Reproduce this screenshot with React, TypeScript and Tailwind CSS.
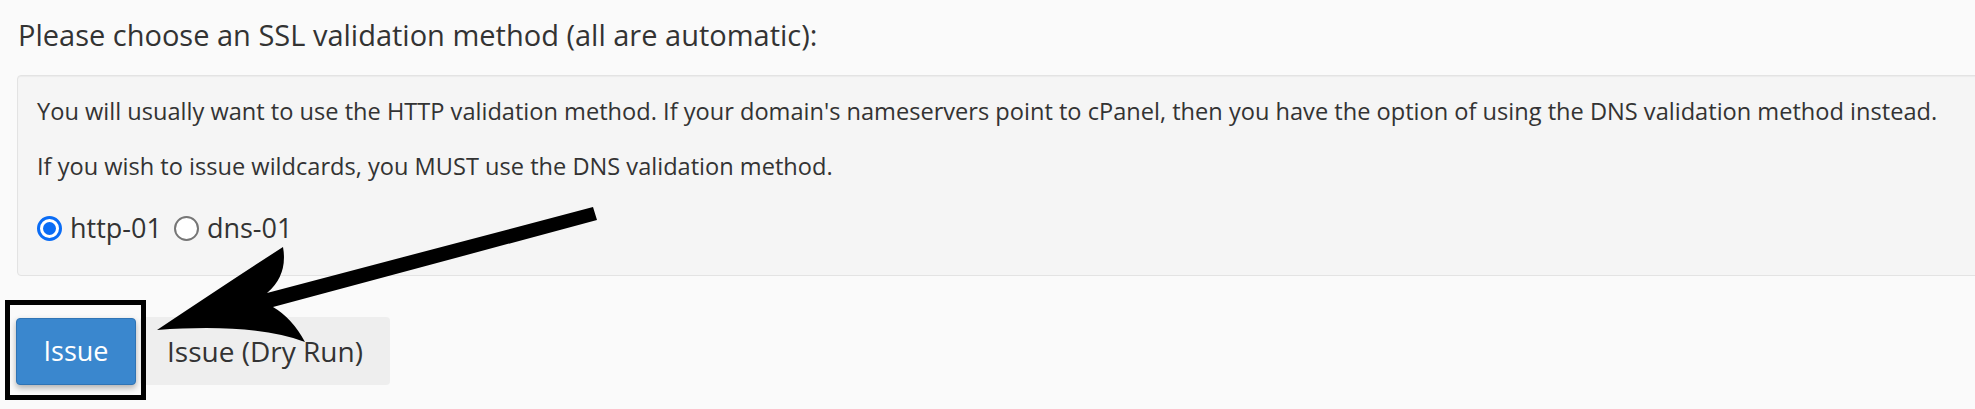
import { useState } from "react";

export default function App() {
    const [method, setMethod] = useState("http-01");

    return (
        <div
            className="relative w-[1975px] h-[409px] overflow-hidden bg-[#fafafa] text-[#333] pl-[17px]"
            style={{ fontFamily: '"Open Sans", "Noto Sans", sans-serif' }}
        >
            {/* Heading */}
            <div className="pt-[15px] pl-px text-[29px] leading-[40px]">
                Please choose an SSL validation method (all are automatic):
            </div>

            {/* Info well */}
            <div className="mt-[20px] mr-[-40px] rounded-[4px] border border-[#e3e3e3] bg-[#f5f5f5] pl-[19px] pt-[19px] pb-[28px] shadow-[inset_0_1px_1px_rgba(0,0,0,0.04)]">
                <p className="text-[23.6px] leading-[32px]">
                    You will usually want to use the HTTP validation method. If your domain's
                    nameservers point to cPanel, then you have the option of using the DNS
                    validation method instead.
                </p>
                <p className="mt-[23px] text-[23.6px] leading-[32px]">
                    If you wish to issue wildcards, you MUST use the DNS validation method.
                </p>
                <div className="mt-[27px] flex items-center text-[27px] leading-[38px]">
                    {["http-01", "dns-01"].map((m, i) => (
                        <label
                            key={m}
                            onClick={() => setMethod(m)}
                            className={`flex items-center cursor-pointer ${i > 0 ? "ml-[12px]" : ""}`}
                        >
                            {method === m ? (
                                <span className="w-[25px] h-[25px] rounded-full border-[3px] border-[#0a6cf5] bg-white flex items-center justify-center">
                                    <span className="w-[13px] h-[13px] rounded-full bg-[#0a6cf5]" />
                                </span>
                            ) : (
                                <span className="w-[25px] h-[25px] rounded-full border-2 border-[#767676] bg-white" />
                            )}
                            <span className="ml-[8px]">{m}</span>
                        </label>
                    ))}
                </div>
            </div>

            {/* Buttons */}
            <div className="mt-[41px] flex items-center -ml-px">
                <button className="w-[120px] h-[67px] rounded-[4px] border border-[#2f74b5] bg-[#3a87ce] text-white text-[27px] shadow-[0_3px_6px_rgba(0,0,0,0.3)]">
                    Issue
                </button>
                <button className="ml-[4px] w-[250px] h-[68px] rounded-[4px] bg-[#eeeeee] text-[#333] text-[28px]">
                    Issue (Dry Run)
                </button>
            </div>

            {/* Highlight box around Issue */}
            <div className="absolute left-[5px] top-[300px] w-[141px] h-[100px] border-[5px] border-black pointer-events-none" />

            {/* Arrow annotation */}
            <svg
                className="absolute left-0 top-0 pointer-events-none"
                width="1975"
                height="409"
                viewBox="0 0 1975 409"
            >
                <path
                    d="M 593 207 L 267 293 Q 288 275 283 247 Q 238 276 157 330 Q 255 323 305 342 Q 292 318 273 307 L 597 220 Z"
                    fill="black"
                />
            </svg>
        </div>
    );
}
